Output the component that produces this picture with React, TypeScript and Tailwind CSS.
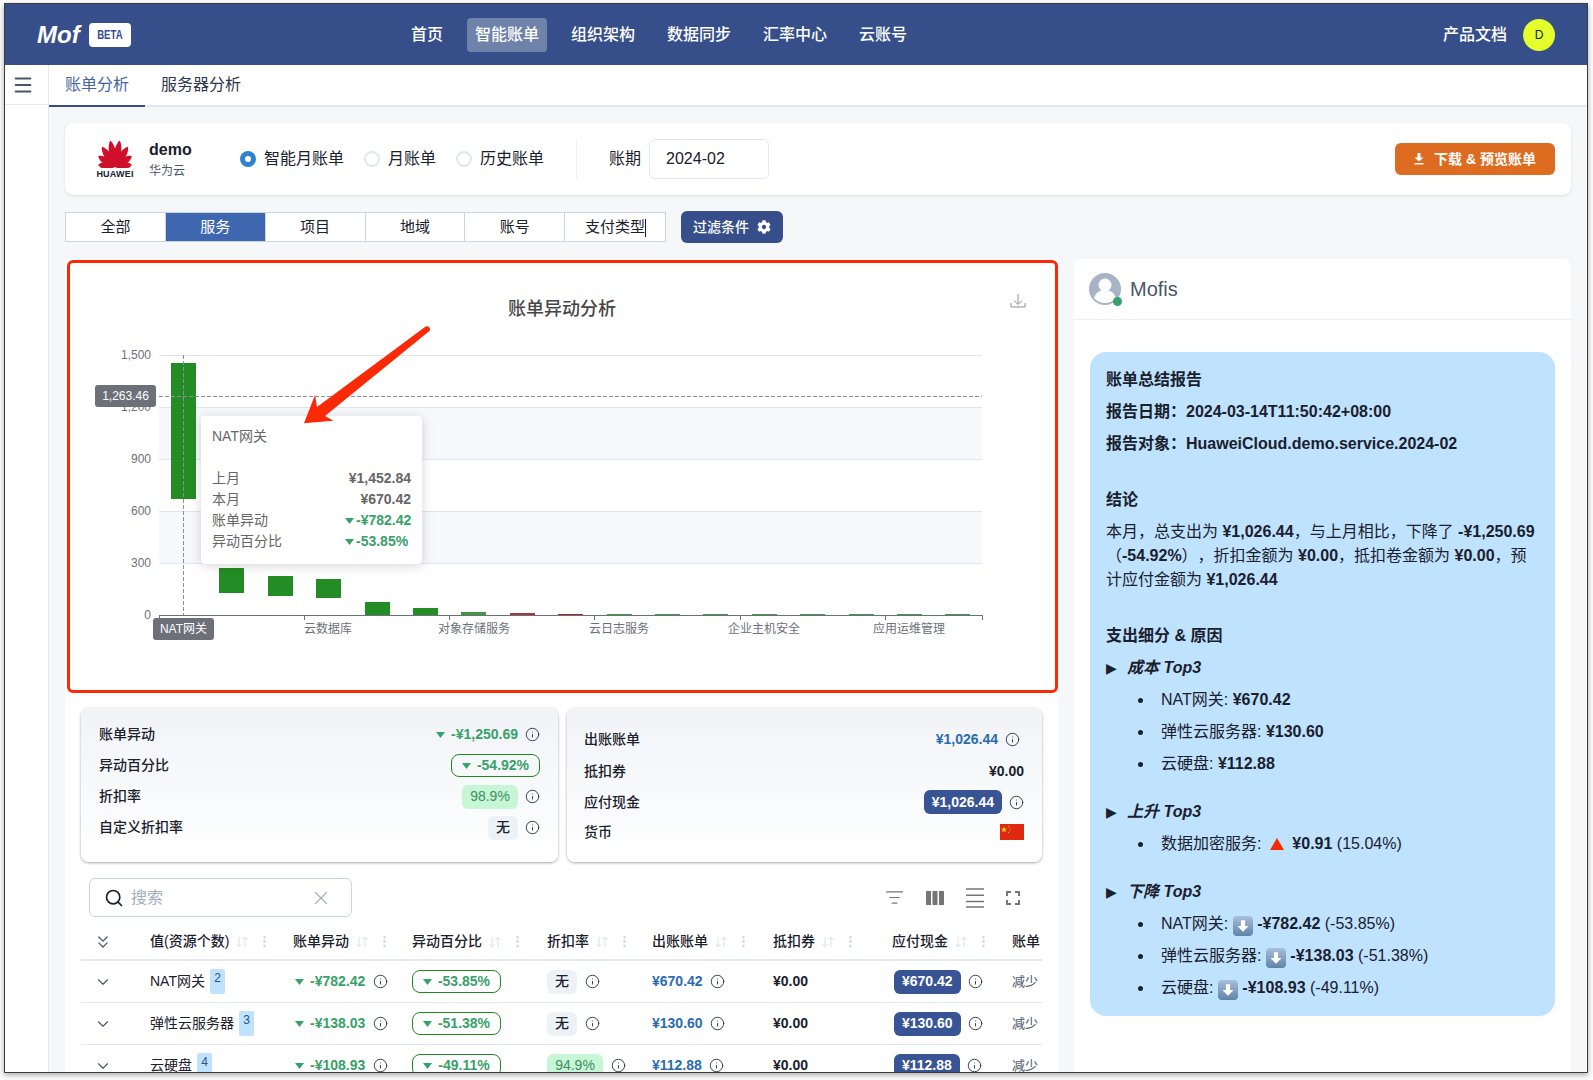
import { ArrowDownUp, ChevronDown, ChevronsDown, EllipsisVertical, Info, ListFilter, Menu, Search, X } from 'lucide-react';
import { FaCog } from 'react-icons/fa';
import type { ReactNode } from 'react';

const navItems = ['首页', '智能账单', '组织架构', '数据同步', '汇率中心', '云账号'];
const segments = ['全部', '服务', '项目', '地域', '账号'];
const gridCols = 'grid grid-cols-[69px_143px_119px_135px_105px_121px_119px_120px_30px]';

const columns = ['值(资源个数)', '账单异动', '异动百分比', '折扣率', '出账账单', '抵扣券', '应付现金'];

const rows = [
  { name: 'NAT网关', count: 2, delta: '-¥782.42', pct: '-53.85%', discount: '无', bill: '¥670.42' },
  { name: '弹性云服务器', count: 3, delta: '-¥138.03', pct: '-51.38%', discount: '无', bill: '¥130.60' },
  { name: '云硬盘', count: 4, delta: '-¥108.93', pct: '-49.11%', discount: '94.9%', bill: '¥112.88' },
];

const yTicks = [
  { label: '1,500', y: 355 },
  { label: '1,200', y: 407 },
  { label: '900', y: 459 },
  { label: '600', y: 511 },
  { label: '300', y: 563 },
  { label: '0', y: 615 },
];

const xTicks = [
  { label: '云数据库', tick: 304, center: 328 },
  { label: '对象存储服务', tick: 449, center: 474 },
  { label: '云日志服务', tick: 594, center: 619 },
  { label: '企业主机安全', tick: 740, center: 764 },
  { label: '应用运维管理', tick: 885, center: 909 },
];

// top and bottom of each waterfall bar, in page pixels
const bars = [
  { x: 171, top: 363, bottom: 499, fill: '#248c24' },
  { x: 219, top: 568, bottom: 593, fill: '#248c24' },
  { x: 268, top: 576, bottom: 596, fill: '#248c24' },
  { x: 316, top: 579, bottom: 598, fill: '#248c24' },
  { x: 365, top: 602, bottom: 615, fill: '#248c24' },
  { x: 413, top: 608, bottom: 615, fill: '#248c24' },
  { x: 461, top: 612, bottom: 615, fill: '#3f9a3f' },
  { x: 510, top: 613, bottom: 615, fill: '#a5383a' },
  { x: 558, top: 614, bottom: 615, fill: '#a5282a' },
  { x: 607, top: 614, bottom: 615, fill: '#3f9a3f' },
  { x: 655, top: 614, bottom: 615, fill: '#3f9a3f' },
  { x: 703, top: 614, bottom: 615, fill: '#3f9a3f' },
  { x: 752, top: 614, bottom: 615, fill: '#3f9a3f' },
  { x: 800, top: 614, bottom: 615, fill: '#3f9a3f' },
  { x: 849, top: 614, bottom: 615, fill: '#3f9a3f' },
  { x: 897, top: 614, bottom: 615, fill: '#3f9a3f' },
  { x: 945, top: 614, bottom: 615, fill: '#3f9a3f' },
];

function Down({ className = 'w-[9px] h-[6px]' }: { className?: string }) {
  return (
    <svg viewBox="0 0 9 6" className={className + ' shrink-0'}>
      <path d="M0 0h9L4.500 6z" fill="currentColor" />
    </svg>
  );
}

function InfoIcon() {
  return <Info size={15} strokeWidth={1.5} className="text-[#2d3748] shrink-0" />;
}

function Delta({ value }: { value: string }) {
  return (
    <span className="flex items-center gap-[6px] text-[#38a169] font-bold text-[14px] whitespace-nowrap">
      <Down />
      {value}
    </span>
  );
}

function PctBadge({ value }: { value: string }) {
  return (
    <span className="flex items-center justify-center gap-[6px] w-[89px] h-[23px] border border-[#1f8a1f] rounded-lg text-[#38a169] font-bold text-[14px]">
      <Down />
      {value}
    </span>
  );
}

function Discount({ value }: { value: string }) {
  if (value === '无') {
    return <span className="flex items-center justify-center w-[30px] h-[24px] rounded-md bg-[#edf2f7] text-[14px] font-medium text-[#1a202c]">无</span>;
  }
  return <span className="flex items-center justify-center w-[56px] h-[24px] rounded-md bg-[#c6f6d5] text-[14px] text-[#3f8f63]">{value}</span>;
}

function CashBadge({ value }: { value: string }) {
  return <span className="flex items-center px-2 h-[24px] rounded-md bg-[#385494] text-white font-bold text-[14px]">{value}</span>;
}

function StatRow({ label, h = 'h-[31px]', children }: { label: string; h?: string; children: ReactNode }) {
  return (
    <div className={'flex items-center justify-between ' + h}>
      <span className="text-[14px] font-medium text-[#1a202c]">{label}</span>
      <div className="flex items-center gap-[7px]">{children}</div>
    </div>
  );
}

function HuaweiLogo() {
  const petals = [
    { a: -82, l: 17 },
    { a: -57, l: 20 },
    { a: -33, l: 24 },
    { a: -10, l: 27 },
    { a: 10, l: 27 },
    { a: 33, l: 24 },
    { a: 57, l: 20 },
    { a: 82, l: 17 },
  ];
  return (
    <div className="w-[38px] flex flex-col items-center">
      <svg viewBox="0 0 36 28" className="w-[36px] h-[28px]">
        {petals.map(p => (
          <path
            key={p.a}
            transform={`rotate(${p.a} 18 27)`}
            d={`M18 27C13 ${27 - p.l * 0.42} 14 ${27 - p.l * 0.82} 18 ${27 - p.l}C22 ${27 - p.l * 0.82} 23 ${27 - p.l * 0.42} 18 27Z`}
            fill="#d0102a"
          />
        ))}
      </svg>
      <span className="text-[9px] leading-[10px] mt-[1px] font-semibold tracking-[0.2px] text-[#1a202c]">HUAWEI</span>
    </div>
  );
}

function Radio({ label, checked = false }: { label: string; checked?: boolean }) {
  return (
    <label className="flex items-center gap-2 text-[16px] text-[#1a202c]">
      {checked ? (
        <span className="w-4 h-4 rounded-full bg-[#3182ce] flex items-center justify-center">
          <span className="w-[6px] h-[6px] rounded-full bg-white" />
        </span>
      ) : (
        <span className="w-4 h-4 rounded-full border-2 border-[#e2e8f0] bg-white" />
      )}
      {label}
    </label>
  );
}

function WaterfallChart() {
  return (
    <svg viewBox="70 263 985 427" className="w-[985px] h-[427px] block">
      <text x="562" y="315" textAnchor="middle" fontSize="18" fontWeight="500" fill="#464646">账单异动分析</text>
      <path d="M1018 294v10M1014 300.500l4 4 4-4M1011 303v4h14v-4" fill="none" stroke="#8a8f99" strokeWidth="1" />
      <rect x="159" y="407" width="823" height="52" fill="#f6f8fc" />
      <rect x="159" y="511" width="823" height="52" fill="#f6f8fc" />
      {yTicks.slice(0, 5).map(t => (
        <line key={t.y} x1="159" x2="982" y1={t.y + 0.5} y2={t.y + 0.5} stroke="#e0e6f1" />
      ))}
      {yTicks.map(t => (
        <text key={t.label} x="151" y={t.y + 4} textAnchor="end" fontSize="12" fill="#6e7079">{t.label}</text>
      ))}
      {bars.map(b => (
        <rect key={b.x} x={b.x} y={b.top} width="25" height={b.bottom - b.top} fill={b.fill} />
      ))}
      <line x1="159" x2="982" y1="615.500" y2="615.500" stroke="#6e7079" />
      {[159, 982, ...xTicks.map(t => t.tick)].map(x => (
        <line key={x} x1={x + 0.5} x2={x + 0.5} y1="615" y2="620" stroke="#6e7079" />
      ))}
      {xTicks.map(t => (
        <text key={t.label} x={t.center} y="633" textAnchor="middle" fontSize="12" fill="#6e7079">{t.label}</text>
      ))}
      <line x1="159" x2="982" y1="396.500" y2="396.500" stroke="#8f9096" strokeDasharray="4 2" />
      <line x1="183.500" x2="183.500" y1="355" y2="615" stroke="#8f9096" strokeDasharray="4 2" />
      <rect x="95" y="385" width="61" height="22" rx="3" fill="#6e7079" />
      <text x="125.500" y="400" textAnchor="middle" fontSize="12" fill="#fff">1,263.46</text>
      <rect x="153" y="618" width="61" height="22" rx="3" fill="#6e7079" />
      <text x="183.500" y="633" textAnchor="middle" fontSize="12" fill="#fff">NAT网关</text>
    </svg>
  );
}

function ChartTooltip() {
  const lines = [
    { label: '上月', value: '¥1,452.84' },
    { label: '本月', value: '¥670.42' },
  ];
  const changes = [
    { label: '账单异动', value: '-¥782.42' },
    { label: '异动百分比', value: '-53.85%' },
  ];
  return (
    <div className="absolute left-[131px] top-[153px] w-[221px] h-[148px] bg-white rounded shadow-[0_2px_12px_rgba(0,0,0,0.16)] px-[11px] pt-[10px] text-[14px] leading-[21px] text-[#666]">
      <div className="h-[42px]">NAT网关</div>
      {lines.map(l => (
        <div key={l.label} className="flex justify-between">
          <span>{l.label}</span>
          <span className="font-bold">{l.value}</span>
        </div>
      ))}
      {changes.map(l => (
        <div key={l.label} className="flex justify-between">
          <span>{l.label}</span>
          <span className="w-[66px] flex items-center gap-[2px] text-[#38a169] font-bold whitespace-nowrap">
            <Down />
            {l.value}
          </span>
        </div>
      ))}
    </div>
  );
}

function ArrowDownEmoji() {
  return (
    <span className="inline-flex items-center justify-center w-5 h-5 rounded-[4px] bg-gradient-to-b from-[#a9c0d8] to-[#5f83a8] align-[-4px]">
      <svg viewBox="0 0 12 12" className="w-[14px] h-[14px]">
        <path d="M4.200 1h3.600v5h3L6 11 1.200 6h3z" fill="#fff" />
      </svg>
    </span>
  );
}

function SummaryList({ items }: { items: ReactNode[] }) {
  return (
    <ul className="mb-6 last:mb-0">
      {items.map((item, i) => (
        <li key={i} className="flex items-center h-6 mb-2 last:mb-0">
          <span className="w-[5px] h-[5px] rounded-full bg-[#1a202c] ml-[32px] mr-[18px]" />
          <span className="whitespace-pre">{item}</span>
        </li>
      ))}
    </ul>
  );
}

function TopHeading({ children }: { children: string }) {
  return (
    <p className="mb-2 font-bold italic">
      <span className="inline-block w-[21px] not-italic text-[14px] font-[family-name:'DejaVu_Sans',sans-serif]">▶</span>
      {children}
    </p>
  );
}

function MofisPanel() {
  return (
    <div className="w-[497px] shrink-0 bg-white rounded-t-lg">
      <div className="h-[61px] border-b border-[#edf2f7] flex items-center pl-[15px]">
        <div className="relative w-8 h-8">
          <svg viewBox="0 0 32 32" className="w-8 h-8">
            <circle cx="16" cy="16" r="16" fill="#a8b3c6" />
            <circle cx="16" cy="12" r="6.500" fill="#fff" />
            <path d="M5 25c2-6 6.500-8 11-8s9 2 11 8c-3 3.500-7 5-11 5s-8-1.500-11-5z" fill="#fff" />
          </svg>
          <span className="absolute right-[-1px] bottom-[-1px] w-[9px] h-[9px] rounded-full bg-[#38a169]" />
        </div>
        <span className="ml-[9px] text-[20px] text-[#4a5568]">Mofis</span>
      </div>
      <div className="mx-4 mt-[32px] rounded-[16px] bg-[#bfe2fe] px-4 pt-4 pb-4 text-[16px] leading-6 text-[#1a202c] [text-spacing-trim:space-all]">
        <p className="mb-2 font-semibold">账单总结报告</p>
        <p className="mb-2 font-bold">报告日期：2024-03-14T11:50:42+08:00</p>
        <p className="font-bold">报告对象：HuaweiCloud.demo.service.2024-02</p>
        <p className="mt-8 mb-2 font-semibold">结论</p>
        <p>
          本月，总支出为 <b>¥1,026.44</b>，与上月相比，下降了 <b>-¥1,250.69</b>
          <br />
          （<b>-54.92%</b>），折扣金额为 <b>¥0.00</b>，抵扣卷金额为 <b>¥0.00</b>，预
          <br />
          计应付金额为 <b>¥1,026.44</b>
        </p>
        <p className="mt-8 mb-2 font-semibold">支出细分 &amp; 原因</p>
        <TopHeading>成本 Top3</TopHeading>
        <SummaryList
          items={[
            <>NAT网关: <b>¥670.42</b></>,
            <>弹性云服务器: <b>¥130.60</b></>,
            <>云硬盘: <b>¥112.88</b></>,
          ]}
        />
        <TopHeading>上升 Top3</TopHeading>
        <SummaryList
          items={[
            <>
              数据加密服务:{' '}
              <svg viewBox="0 0 14 12" className="inline w-[14px] h-[12px] mx-1 align-[-1px]">
                <path d="M7 0l7 12H0z" fill="#f52a00" />
              </svg>{' '}
              <b>¥0.91</b> (15.04%)
            </>,
          ]}
        />
        <TopHeading>下降 Top3</TopHeading>
        <SummaryList
          items={[
            <>NAT网关: <ArrowDownEmoji /> <b>-¥782.42</b> (-53.85%)</>,
            <>弹性云服务器: <ArrowDownEmoji /> <b>-¥138.03</b> (-51.38%)</>,
            <>云硬盘: <ArrowDownEmoji /> <b>-¥108.93</b> (-49.11%)</>,
          ]}
        />
      </div>
    </div>
  );
}

function BillTable() {
  return (
    <div className="mt-2 mx-4 h-[220px] overflow-hidden">
      <div className="flex items-center justify-between h-[47px] pl-2 pt-2">
        <div className="flex items-center w-[263px] h-[39px] border border-[#cbd5e0] rounded-md pl-[14px] pr-[19px]">
          <Search size={20} strokeWidth={2} className="text-[#1a202c]" />
          <span className="ml-[7px] text-[16px] text-[#a0aec0]">搜索</span>
          <X size={22} strokeWidth={1.25} className="ml-auto text-[#a0aec0]" />
        </div>
        <div className="flex items-center gap-[22px] pr-[22px] text-[#757575]">
          <ListFilter size={19} strokeWidth={1.5} />
          <svg viewBox="0 0 18 14" className="w-[18px] h-[14px]">
            <path d="M0 0h5v14H0zM6.500 0h5v14h-5zM13 0h5v14h-5z" fill="currentColor" />
          </svg>
          <svg viewBox="0 0 18 20" className="w-[18px] h-[20px]">
            <path d="M0 1h18M0 7.300h18M0 13.600h18M0 19h18" stroke="currentColor" strokeWidth="1.500" />
          </svg>
          <svg viewBox="0 0 14 14" className="w-[14px] h-[14px]">
            <path d="M1 5V1h4M9 1h4v4M13 9v4H9M5 13H1V9" fill="none" stroke="currentColor" strokeWidth="2" />
          </svg>
        </div>
      </div>
      <div className={gridCols + ' h-[44px] pt-[7px] items-center border-b-2 border-[#e2e8f0] w-[1000px]'}>
        <ChevronsDown size={20} strokeWidth={1.5} className="ml-[12px] text-[#4a5568]" />
        {columns.map(c => (
          <div key={c} className="flex items-center text-[14px] font-medium text-[#1a202c]">
            {c}
            <ArrowDownUp size={14} strokeWidth={1.25} className="ml-[6px] text-[#cbd5e0]" />
            <EllipsisVertical size={15} strokeWidth={2} className="ml-[8px] text-[#cbd5e0]" />
          </div>
        ))}
        <div className="text-[14px] font-medium text-[#1a202c] whitespace-nowrap">账单</div>
      </div>
      {rows.map(r => (
        <div key={r.name} className={gridCols + ' h-[42px] items-center border-b border-[#e2e8f0] w-[1000px] text-[14px]'}>
          <ChevronDown size={18} strokeWidth={1.5} className="ml-[13px] text-[#4a5568]" />
          <div className="flex items-center gap-[5px] text-[#1a202c]">
            {r.name}
            <span className="w-[15px] h-[25px] rounded-[2px] bg-[#bfe2fe] text-center text-[12px] leading-[18px] font-medium text-[#2c5282]">{r.count}</span>
          </div>
          <div className="flex items-center gap-[8px] pl-[2px]">
            <Delta value={r.delta} />
            <InfoIcon />
          </div>
          <div><PctBadge value={r.pct} /></div>
          <div className="flex items-center gap-[8px]">
            <Discount value={r.discount} />
            <InfoIcon />
          </div>
          <div className="flex items-center gap-[7px]">
            <span className="font-bold text-[#2b6cb0]">{r.bill}</span>
            <InfoIcon />
          </div>
          <div className="font-bold text-[#1a202c]">¥0.00</div>
          <div className="flex items-center gap-[7px] pl-[2px]">
            <CashBadge value={r.bill} />
            <InfoIcon />
          </div>
          <div className="text-[13px] text-[#4a5568] whitespace-nowrap">减少</div>
        </div>
      ))}
    </div>
  );
}

export default function App() {
  return (
    <div className="w-[1593px] h-[1080px] bg-white pl-[4px] pt-[3px] overflow-hidden font-[family-name:'Liberation_Sans','Noto_Sans_CJK_SC',sans-serif]">
      <div className="w-[1584px] h-[1070px] border border-[#3c3c3c] overflow-hidden flex flex-col shadow-[0_2px_6px_rgba(0,0,0,0.35)]">
        {/* Header */}
        <header className="h-[61px] shrink-0 bg-[#364f8a] flex items-center px-[32px] text-white">
          <span className="text-[24px] font-bold italic leading-none w-[52px]">Mof</span>
          <span className="w-[42px] h-[24px] rounded bg-white text-[#364f8a] text-[12px] font-bold flex items-center justify-center">
            <span className="scale-x-[0.8]">BETA</span>
          </span>
          <nav className="ml-[272px] flex items-center gap-4">
            {navItems.map(item => (
              <a key={item} className={'px-2 h-[34px] flex items-center rounded text-[16px] font-medium ' + (item === '智能账单' ? 'bg-[#6f82aa]' : '')}>
                {item}
              </a>
            ))}
          </nav>
          <span className="ml-auto text-[16px] font-medium">产品文档</span>
          <span className="ml-4 w-8 h-8 rounded-full bg-[#e4ff2b] text-[#1a202c] text-[12px] flex items-center justify-center">D</span>
        </header>

        <div className="flex flex-1 min-h-0">
          {/* Sidebar */}
          <aside className="w-[44px] shrink-0 bg-white border-r border-[#e2e8f0]">
            <div className="h-[40px] border-b border-[#e2e8f0] flex items-center pl-[7px]">
              <Menu size={22} strokeWidth={2.25} className="text-[#4a5568]" />
            </div>
          </aside>

          <main className="flex-1 min-w-0 bg-[#f6f7f8] flex flex-col">
            {/* Tabs */}
            <div className="h-[42px] shrink-0 bg-white border-b-2 border-[#e2e8f0] flex">
              <a className="px-4 h-[42px] border-b-2 border-[#364f8a] flex items-center text-[16px] text-[#46659f]">账单分析</a>
              <a className="px-4 h-[40px] flex items-center text-[16px] text-[#2d3748]">服务器分析</a>
            </div>

            <div className="px-4 pt-4 flex flex-col flex-1 min-h-0">
              {/* Account card */}
              <div className="h-[72px] shrink-0 bg-white rounded-lg shadow-[0_1px_3px_rgba(0,0,0,0.1)] flex items-center pl-[31px] pr-[16px]">
                <HuaweiLogo />
                <div className="ml-[15px] w-[76px]">
                  <div className="text-[16px] leading-[24px] font-semibold text-[#1a202c]">demo</div>
                  <div className="text-[12px] leading-[18px] text-[#4a5568]">华为云</div>
                </div>
                <div className="ml-[15px] flex items-center gap-[20px]">
                  <Radio label="智能月账单" checked />
                  <Radio label="月账单" />
                  <Radio label="历史账单" />
                </div>
                <div className="ml-[32px] w-px h-[40px] bg-[#edf2f7]" />
                <span className="ml-[32px] text-[16px] text-[#1a202c]">账期</span>
                <div className="ml-2 w-[120px] h-[40px] border border-[#e2e8f0] rounded-md pl-4 flex items-center text-[16px] text-[#1a202c]">2024-02</div>
                <button className="ml-auto h-[32px] w-[160px] rounded-md bg-[#dd6b20] text-white text-[14px] font-semibold flex items-center justify-center gap-[10px]">
                  <svg viewBox="0 0 10 12" className="w-[10px] h-[12px]">
                    <path d="M3.500 0h3v4.500H9.500L5 8.500.5 4.500h3zM.5 10h9v1.500h-9z" fill="currentColor" />
                  </svg>
                  下载 &amp; 预览账单
                </button>
              </div>

              {/* Group by */}
              <div className="mt-4 h-[32px] shrink-0 flex items-center gap-[15px]">
                <div className="relative w-[601px] h-[30px] grid grid-cols-6 border border-[#cbd5e0] bg-white text-[15px] text-[#1a202c]">
                  {segments.map(s => (
                    <div key={s} className={'flex items-center justify-center border-r border-[#cbd5e0] ' + (s === '服务' ? 'bg-[#3f67b0] text-white' : '')}>
                      {s}
                    </div>
                  ))}
                  <div className="flex items-center justify-center relative">
                    支付类型
                    <span className="absolute left-[80px] top-[6px] w-px h-[18px] bg-[#1a202c]" />
                  </div>
                </div>
                <button className="w-[102px] h-[32px] rounded-md bg-[#364f8a] text-white text-[14px] font-medium flex items-center justify-center gap-2">
                  过滤条件
                  <FaCog size={14} />
                </button>
              </div>

              <div className="mt-4 flex gap-4 flex-1 min-h-0 overflow-hidden">
                {/* Left column */}
                <div className="w-[993px] shrink-0 bg-white pt-px">
                  <div className="relative ml-[2px] w-[991px] h-[433px] border-[3px] border-[#fa2a07] rounded-md">
                    <WaterfallChart />
                    <ChartTooltip />
                    <svg viewBox="67 260 991 433" className="absolute -left-[3px] -top-[3px] w-[991px] h-[433px]">
                      <path d="M304 423.300 L315 395 L317 407 L426 326.300 Q430.500 326 430 330.500 L325 416 L333.300 420.700 Z" fill="#fa2a07" />
                    </svg>
                  </div>

                  <div className="mt-[15px] mx-4 flex gap-[9px]">
                    <div className="w-[477px] h-[154px] rounded-lg bg-gradient-to-b from-[#f1f3f7] to-white shadow-[0_1px_3px_rgba(0,0,0,0.35)] px-[18px] pt-[11px]">
                      <StatRow label="账单异动">
                        <Delta value="-¥1,250.69" />
                        <InfoIcon />
                      </StatRow>
                      <StatRow label="异动百分比">
                        <PctBadge value="-54.92%" />
                      </StatRow>
                      <StatRow label="折扣率">
                        <Discount value="98.9%" />
                        <InfoIcon />
                      </StatRow>
                      <StatRow label="自定义折扣率">
                        <Discount value="无" />
                        <InfoIcon />
                      </StatRow>
                    </div>
                    <div className="w-[475px] h-[154px] rounded-lg bg-gradient-to-b from-[#f1f3f7] to-white shadow-[0_1px_3px_rgba(0,0,0,0.35)] pl-[17px] pr-[18px] pt-[15px]">
                      <StatRow label="出账账单" h="h-[32px]">
                        <span className="font-bold text-[14px] text-[#2b6cb0]">¥1,026.44</span>
                        <span className="mr-[4px]"><InfoIcon /></span>
                      </StatRow>
                      <StatRow label="抵扣券" h="h-[32px]">
                        <span className="font-bold text-[14px] text-[#1a202c]">¥0.00</span>
                      </StatRow>
                      <StatRow label="应付现金" h="h-[30px]">
                        <CashBadge value="¥1,026.44" />
                        <InfoIcon />
                      </StatRow>
                      <StatRow label="货币" h="h-[30px]">
                        <svg viewBox="0 0 24 16" className="w-6 h-4">
                          <rect width="24" height="16" fill="#de2910" />
                          <path d="M4 2.500l.8 2.200 2.300 0-1.900 1.400.7 2.200L4 7l-1.900 1.300.7-2.200L.9 4.700l2.300 0z" fill="#ffde00" />
                          <circle cx="8.500" cy="2" r=".6" fill="#ffde00" />
                          <circle cx="10" cy="4" r=".6" fill="#ffde00" />
                          <circle cx="10" cy="6.500" r=".6" fill="#ffde00" />
                          <circle cx="8.500" cy="8.500" r=".6" fill="#ffde00" />
                        </svg>
                      </StatRow>
                    </div>
                  </div>

                  <BillTable />
                </div>

                <MofisPanel />
              </div>
            </div>
          </main>
        </div>
      </div>
    </div>
  );
}
